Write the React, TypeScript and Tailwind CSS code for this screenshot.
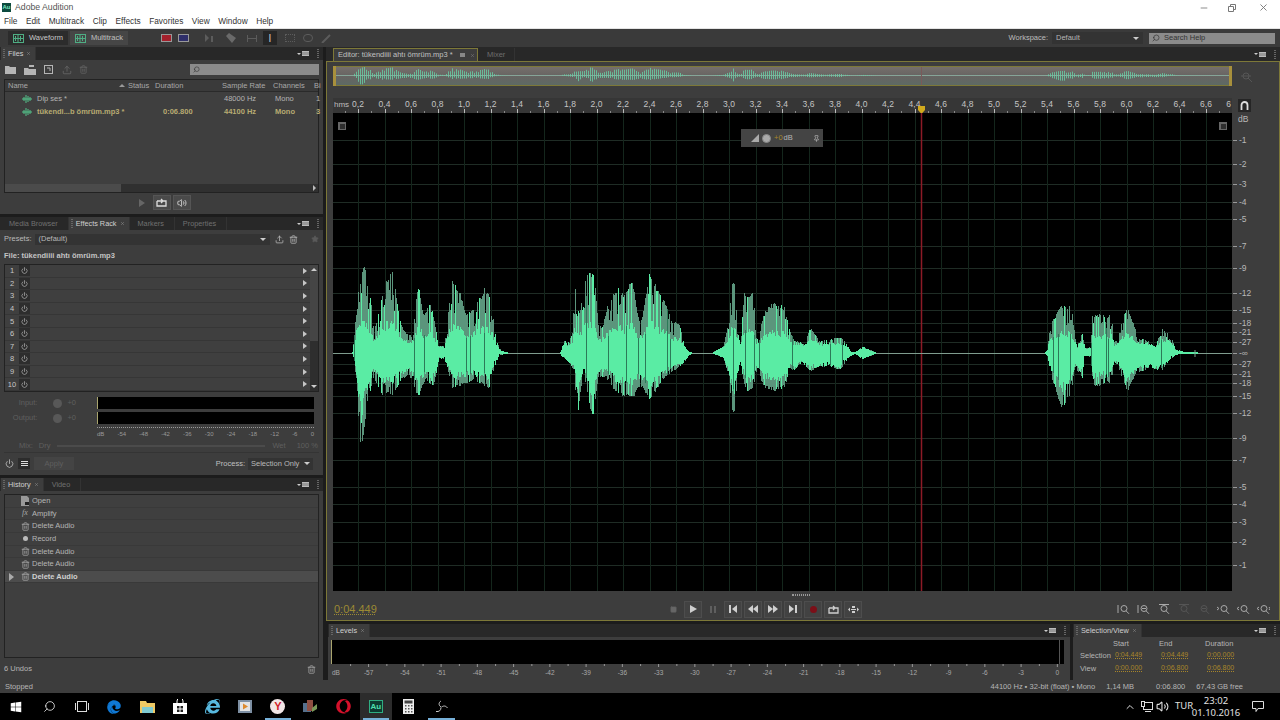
import { ChevronUp, Minus, Pin, Power, Search, Square, Star, Trash2, Upload, Volume2, X } from 'lucide-react'
import { FaEdge, FaInternetExplorer, FaOpera, FaWindows } from 'react-icons/fa'

type Pt = [number, number]

const upper: Pt[][] = [
  [[353, 1], [355, 18], [357, 50], [363, 90], [370, 52], [373, 18], [378, 35], [387, 78], [392, 83], [398, 35], [403, 22], [413, 15], [418, 65], [423, 35], [430, 52], [437, 8], [445, 7], [452, 72], [460, 58], [465, 37], [473, 45], [485, 65], [490, 52], [495, 12], [500, 2], [506, 1]],
  [[561, 1], [562, 3], [564, 12], [568, 10], [573, 20], [575, 65], [578, 30], [587, 83], [593, 78], [597, 30], [603, 25], [607, 45], [618, 68], [623, 55], [631, 73], [640, 22], [650, 80], [657, 62], [665, 50], [670, 33], [678, 30], [683, 8], [687, 2], [690, 1]],
  [[714, 1], [724, 7], [729, 30], [733, 72], [737, 18], [741, 15], [745, 62], [752, 62], [755, 15], [759, 12], [764, 40], [772, 50], [783, 47], [788, 25], [793, 13], [802, 10], [805, 8], [810, 24], [819, 12], [831, 14], [839, 16], [845, 10], [850, 1], [855, 1], [862, 6], [869, 3], [874, 1]],
  [[1046, 1], [1048, 3], [1051, 30], [1062, 48], [1070, 48], [1074, 15], [1077, 2], [1081, 19], [1084, 4], [1091, 6], [1093, 40], [1110, 38], [1113, 12], [1118, 12], [1124, 40], [1127, 45], [1134, 25], [1137, 15], [1148, 12], [1156, 4], [1161, 25], [1170, 18], [1174, 4], [1182, 1.5], [1196, 1]],
]

const lower: Pt[][] = [
  [[353, 1], [355, 8], [357, 33], [361, 98], [365, 57], [373, 23], [383, 43], [392, 43], [400, 27], [410, 22], [418, 43], [425, 25], [432, 35], [438, 5], [445, 6], [453, 35], [473, 28], [488, 35], [493, 15], [498, 2], [506, 1]],
  [[561, 1], [562, 3], [568, 8], [575, 18], [577, 57], [583, 15], [592, 62], [597, 25], [607, 25], [617, 42], [632, 45], [640, 32], [650, 47], [660, 28], [673, 18], [682, 10], [690, 1]],
  [[714, 1], [724, 5], [729, 22], [733, 60], [737, 18], [741, 12], [747, 42], [752, 35], [757, 10], [764, 35], [774, 38], [784, 35], [788, 15], [793, 18], [802, 8], [810, 18], [819, 14], [831, 14], [839, 17], [848, 4], [855, 1], [862, 6], [869, 3], [874, 1]],
  [[1046, 1], [1048, 3], [1053, 28], [1062, 55], [1070, 40], [1074, 10], [1081, 25], [1083, 3], [1091, 4], [1094, 35], [1110, 30], [1113, 8], [1118, 12], [1127, 38], [1134, 22], [1148, 15], [1161, 18], [1168, 8], [1174, 2], [1182, 1], [1196, 1]],
]

function interp(groups: Pt[][], x: number) {
  for (const pts of groups) {
    if (x < pts[0][0] || x > pts[pts.length - 1][0]) continue
    for (let i = 1; i < pts.length; i++) {
      if (x <= pts[i][0]) {
        const [x0, y0] = pts[i - 1]
        const [x1, y1] = pts[i]
        return y0 + ((y1 - y0) * (x - x0)) / (x1 - x0)
      }
    }
  }
  return 0
}

// widen the peaks a little, the outline points sit on the very tips
const fat = (groups: Pt[][], x: number) => Math.max(interp(groups, x - 1), interp(groups, x), interp(groups, x + 1))

function buildWave() {
  let seed = 17
  const rnd = () => {
    seed = (seed * 16807) % 2147483647
    return seed / 2147483647
  }
  const columns = []
  for (let x = 333; x < 1232; x++) {
    const up = fat(upper, x)
    const down = fat(lower, x)
    if (up < 0.5 && down < 0.5) continue
    const r = rnd() < 0.3 ? 0.55 + rnd() * 0.25 : 0.9 + rnd() * 0.1
    const spike = rnd() < 0.24
    const dimUp = up * r
    const dimDown = down * r
    const softUp = Math.min(up, 6 + 0.34 * up) * (0.72 + rnd() * 0.28)
    const softDown = Math.min(down, 5 + 0.62 * down) * (0.72 + rnd() * 0.28)
    columns.push({
      x: x + 0.5,
      dimUp,
      dimDown,
      brightUp: spike ? dimUp : softUp,
      brightDown: spike ? dimDown : softDown,
      cut: up > 12 && rnd() < 0.035,
    })
  }
  return columns
}

const columns = buildWave()
const dimPath = columns.map((c) => `M${c.x} ${352 - c.dimUp}V${352 + c.dimDown}`).join('')
const brightPath = columns.filter((c) => !c.cut).map((c) => `M${c.x} ${352 - c.brightUp}V${352 + c.brightDown}`).join('')
const cutPath = columns.filter((c) => c.cut).map((c) => `M${c.x} ${352 - c.brightUp}V${352 + c.brightDown}`).join('')
const miniPath = columns.filter((c, i) => i % 2 === 0).map((c) => `M${c.x} ${74.5 - c.dimUp * 0.1}V${74.5 + c.dimDown * 0.1}`).join('')

const dbMarks: [string, number][] = [
  ['-1', 139], ['-2', 163], ['-3', 183], ['-4', 201], ['-5', 218], ['-7', 245], ['-9', 267], ['-12', 292], ['-15', 309], ['-18', 322], ['-21', 331], ['-27', 341], ['-∞', 352], ['-27', 363], ['-21', 373], ['-18', 382], ['-15', 395], ['-12', 412], ['-9', 437], ['-7', 459], ['-5', 486], ['-4', 503], ['-3', 521], ['-2', 541], ['-1', 564],
]

const timeX = (t: number) => 331.5 + 132.5 * t
const seconds = Array.from({ length: 33 }, (_, i) => (i + 1) * 0.2)
const tenths = Array.from({ length: 34 }, (_, i) => i * 0.2 + 0.1)

const font = 'Liberation Sans, Arial, sans-serif'

function Grip() {
  return <div className="mx-[2px] h-[9px] w-[2px] border-x border-dotted border-[#666]" />
}

function PanelMenu() {
  return (
    <div className="ml-auto flex items-center gap-[6px] pr-[2px]">
      <div className="flex items-center gap-[1px]">
        <div className="h-0 w-0 border-x-[2px] border-t-[2px] border-x-transparent border-t-[#ccc]" />
        <div className="h-[5px] w-[7px] border-y border-[#bbb] bg-[#999]" />
      </div>
      <Grip />
    </div>
  )
}

function Tab({ label, active, close }: { label: string; active?: boolean; close?: boolean }) {
  return (
    <div className={`flex h-full items-center gap-[1px] border-r border-[#333] ${active ? 'bg-[#3d3d3d] pr-[4px] text-[#d0d0d0]' : 'px-[8px] text-[#707070]'}`}>
      {active && <Grip />}
      <span className="mr-[2px] pt-[2px]">{label}</span>
      {close && <X size={5} className="text-[#999]" />}
    </div>
  )
}

function TabBar({ children }: { children: React.ReactNode }) {
  return <div className="flex h-[13px] shrink-0 items-center bg-[#282828] pl-[1px] text-[7.300px]">{children}<PanelMenu /></div>
}

function WaveIcon({ color = '#54c48c' }: { color?: string }) {
  return (
    <svg width="10" height="8" viewBox="0 0 10 8" fill="none" stroke={color}>
      <path d="M0 4h10M2 2v4M4 0v8M6 1v6M8 2v4" />
    </svg>
  )
}

function ModeIcon() {
  return (
    <svg width="11" height="9" viewBox="0 0 11 9" fill="none" stroke="#4fae84">
      <rect x="0.5" y="0.5" width="10" height="8" />
      <path d="M0 4.5h11M2.5 2v5M5 1v7M7.5 2v5" />
    </svg>
  )
}

function Zoomer({ mark, dim }: { mark: string; dim?: boolean }) {
  return (
    <svg width="13" height="11" viewBox="0 0 13 11" fill="none" stroke={dim ? '#555' : '#a9a9a9'} strokeWidth="1">
      <circle cx="7" cy="4.5" r="3" />
      <path d="M9 6.8l3 3" />
      <path d={mark} />
    </svg>
  )
}

function FilesPanel() {
  const cols = 'grid grid-cols-[120px_27px_67px_51px_41px_1fr] items-center'
  return (
    <div className="flex h-[167px] shrink-0 flex-col">
      <TabBar><Tab label="Files" active close /></TabBar>
      <div className="flex flex-1 flex-col bg-[#3d3d3d] px-[4px]">
        <div className="flex h-[19px] shrink-0 items-center gap-[7px] pl-[1px]">
          <svg width="12" height="9" viewBox="0 0 12 9" fill="#b5b5b5"><path d="M0 1h4l1 1h6v7H0z" /></svg>
          <svg width="13" height="10" viewBox="0 0 13 10" fill="#b5b5b5"><path d="M0 3h4l1 1h7v6H0zM5 0h5v2H5z" /></svg>
          <svg width="11" height="9" viewBox="0 0 11 9" fill="none" stroke="#b5b5b5"><rect x="0.5" y="0.5" width="8" height="8" /><path d="M3 3h3v3" /></svg>
          <Upload size={10} className="text-[#666]" />
          <Trash2 size={9} className="text-[#666]" />
          <div className="ml-auto flex h-[11px] w-[129px] items-center bg-[#8b8b8b] pl-[3px]">
            <Search size={7} className="-scale-x-100 text-[#333]" />
          </div>
        </div>
        <div className="flex h-[114px] shrink-0 flex-col border border-[#222] bg-[#3f3f3f] text-[7.500px]">
          <div className={`${cols} h-[12px] shrink-0 border-b border-[#2a2a2a] bg-[#3a3a3a] pl-[3px] text-[#a8a8a8]`}>
            <span className="flex items-center justify-between pr-[3px]">Name<span className="h-0 w-0 border-x-[3px] border-b-[3px] border-x-transparent border-b-[#999]" /></span>
            <span>Status</span>
            <span>Duration</span>
            <span>Sample Rate</span>
            <span>Channels</span>
            <span>Bi</span>
          </div>
          <div className={`${cols} h-[13px] text-[#b5b5b5]`}>
            <span className="flex items-center gap-[5px] pl-[17px]"><WaveIcon />Dip ses *</span>
            <span />
            <span />
            <span className="pl-[5px]">48000 Hz</span>
            <span className="pl-[5px]">Mono</span>
            <span className="pl-[5px]">1</span>
          </div>
          <div className={`${cols} h-[13px] font-bold text-[#b8ab72]`}>
            <span className="flex items-center gap-[5px] whitespace-nowrap pl-[17px]"><WaveIcon />tükendi...b ömrüm.mp3 *</span>
            <span />
            <span className="pl-[11px]">0:06.800</span>
            <span className="pl-[5px]">44100 Hz</span>
            <span className="pl-[5px]">Mono</span>
            <span className="pl-[5px]">3</span>
          </div>
          <div className="mt-auto flex h-[8px] items-center bg-[#303030]">
            <div className="h-full w-[116px] bg-[#4b4b4b]" />
            <div className="ml-auto mr-[2px] h-0 w-0 border-y-[3px] border-l-[3px] border-y-transparent border-l-[#bbb]" />
          </div>
        </div>
        <div className="flex flex-1 items-start justify-center gap-[2px] pt-[2px]">
          <div className="flex h-[15px] w-[18px] items-center justify-center"><div className="h-0 w-0 border-y-[4px] border-l-[6px] border-y-transparent border-l-[#666]" /></div>
          <div className="flex h-[15px] w-[18px] items-center justify-center border border-[#555] bg-[#4a4a4a]">
            <svg width="11" height="9" viewBox="0 0 11 9" fill="none" stroke="#ddd" strokeWidth="1.3"><path d="M1 3v5h9V3H7M1 3h5M5 1l2 2-2 2" /></svg>
          </div>
          <div className="flex h-[15px] w-[18px] items-center justify-center border border-[#555] bg-[#4a4a4a]"><Volume2 size={10} className="text-[#ddd]" /></div>
        </div>
      </div>
    </div>
  )
}

function EffectsPanel() {
  const rows = [1, 2, 3, 4, 5, 6, 7, 8, 9, 10]
  const scale = ['dB', '-54', '-48', '-42', '-36', '-30', '-24', '-18', '-12', '-6', '0']
  return (
    <div className="flex h-[258px] shrink-0 flex-col">
      <TabBar>
        <Tab label="Media Browser" />
        <Tab label="Effects Rack" active close />
        <Tab label="Markers" />
        <Tab label="Properties" />
      </TabBar>
      <div className="flex flex-1 flex-col bg-[#3d3d3d] px-[4px] text-[7.500px] text-[#b9b9b9]">
        <div className="flex h-[18px] shrink-0 items-center gap-[3px]">
          <span>Presets:</span>
          <div className="flex h-[11px] w-[235px] items-center justify-between bg-[#333] pl-[4px] pr-[4px]">
            <span>(Default)</span>
            <div className="h-0 w-0 border-x-[3px] border-t-[3px] border-x-transparent border-t-[#ccc]" />
          </div>
          <Upload size={9} className="ml-[2px] text-[#bbb]" />
          <Trash2 size={9} className="ml-[2px] text-[#bbb]" />
          <Star size={8} fill="#5a5a5a" className="ml-[10px] text-[#5a5a5a]" />
        </div>
        <div className="flex h-[16px] shrink-0 items-center font-bold text-[#c4c4c4]">File: tükendiiii ahtı ömrüm.mp3</div>
        <div className="flex h-[128px] shrink-0 border border-[#222]">
          <div className="flex flex-1 flex-col">
            {rows.map((n) => (
              <div key={n} className="flex flex-1 items-center border-b border-[#363636] bg-[#3f3f3f] pr-[3px]">
                <span className="w-[14px] text-center text-[#c8c8c8]">{n}</span>
                <div className="flex h-[11px] w-[11px] items-center justify-center bg-[#2d2d2d]"><Power size={7} className="text-[#ccc]" /></div>
                <div className="ml-auto h-0 w-0 border-y-[3px] border-l-[4px] border-y-transparent border-l-[#c5c5c5]" />
              </div>
            ))}
          </div>
          <div className="flex w-[8px] flex-col items-center bg-[#2e2e2e]">
            <div className="flex h-[76px] w-full flex-col items-center bg-[#454545] pt-[3px]"><div className="h-0 w-0 border-x-[3px] border-b-[3px] border-x-transparent border-b-[#ccc]" /></div>
            <div className="mb-[3px] mt-auto h-0 w-0 border-x-[3px] border-t-[3px] border-x-transparent border-t-[#ccc]" />
          </div>
        </div>
        <div className="flex h-[48px] shrink-0 pt-[5px] text-[#5f5f5f]">
          <div className="flex w-[93px] flex-col gap-[3px]">
            <div className="flex h-[12px] items-center justify-end gap-[5px] pr-[21px]"><span className="mr-[11px]">Input:</span><span className="h-[9px] w-[9px] rounded-full bg-[#585858]" /><span>+0</span></div>
            <div className="flex h-[12px] items-center justify-end gap-[5px] pr-[21px]"><span className="mr-[11px]">Output:</span><span className="h-[9px] w-[9px] rounded-full bg-[#585858]" /><span>+0</span></div>
          </div>
          <div className="flex flex-1 flex-col gap-[3px] pr-[5px]">
            <div className="h-[12px] border-l border-[#a9a56e] bg-black" />
            <div className="h-[12px] border-l border-[#a9a56e] bg-black" />
            <div className="flex justify-between border-t border-dotted border-[#999] pt-[2px] text-[6px] text-[#999]">
              {scale.map((s, i) => <span key={i}>{s}</span>)}
            </div>
          </div>
        </div>
        <div className="flex h-[13px] shrink-0 items-center border-b border-[#343434] pl-[15px] text-[#5f5f5f]">
          <span className="mr-[6px]">Mix:</span>
          <span>Dry</span>
          <div className="mx-[7px] h-[2px] w-[208px] border-y border-[#4b4b4b] bg-[#333]" />
          <span>Wet</span>
          <span className="ml-[11px]">100 %</span>
        </div>
        <div className="flex flex-1 items-center pb-[1px]">
          <Power size={9} className="ml-[1px] text-[#c8c8c8]" />
          <div className="ml-[4px] flex h-[11px] w-[12px] flex-col items-center justify-center gap-[1px] bg-[#2c2c2c]"><div className="h-[1px] w-[7px] bg-[#ddd]" /><div className="h-[1px] w-[7px] bg-[#ddd]" /><div className="h-[1px] w-[7px] bg-[#ddd]" /></div>
          <div className="ml-[4px] flex h-[13px] w-[40px] items-center justify-center bg-[#444] text-[#5f5f5f]">Apply</div>
          <span className="ml-auto text-[#c0c0c0]">Process:</span>
          <div className="ml-[3px] mr-[6px] flex h-[12px] w-[65px] items-center justify-between bg-[#333] pl-[3px] pr-[3px]">
            <span className="whitespace-nowrap">Selection Only</span>
            <div className="h-0 w-0 border-x-[3px] border-t-[3px] border-x-transparent border-t-[#ccc]" />
          </div>
        </div>
      </div>
    </div>
  )
}

function HistoryPanel() {
  const bin = <Trash2 size={9} className="text-[#aaa]" />
  const items: [React.ReactNode, string][] = [
    [<svg key="o" width="9" height="10" viewBox="0 0 9 10" fill="#999"><path d="M0 0h6l2 2v8H0z" /><path d="M4 6h4v3H4z" fill="#222" /></svg>, 'Open'],
    [<span key="f" className="font-['Liberation_Serif'] text-[8px] italic text-[#aaa]">fx</span>, 'Amplify'],
    [bin, 'Delete Audio'],
    [<span key="r" className="h-[5px] w-[5px] rounded-full bg-[#bbb]" />, 'Record'],
    [bin, 'Delete Audio'],
    [bin, 'Delete Audio'],
    [bin, 'Delete Audio'],
  ]
  return (
    <div className="flex flex-1 flex-col">
      <TabBar>
        <Tab label="History" active close />
        <Tab label="Video" />
      </TabBar>
      <div className="flex flex-1 flex-col bg-[#3d3d3d] px-[4px] pt-[3px] text-[7.500px] text-[#b5b5b5]">
        <div className="flex h-[164px] shrink-0 flex-col border border-[#222] bg-[#3f3f3f]">
          {items.map(([icon, label], i) => (
            <div key={i} className={`flex h-[12.650px] shrink-0 items-center border-b border-[#393939] ${i === 6 ? 'bg-[#4c4c4c] font-bold text-[#d0d0d0]' : ''}`}>
              <div className="flex w-[13px] justify-center">
                {i === 6 && <div className="h-0 w-0 border-y-[4px] border-l-[5px] border-y-transparent border-l-[#aaa]" />}
              </div>
              <div className="flex w-[14px] justify-center">{icon}</div>
              <span>{label}</span>
            </div>
          ))}
        </div>
        <div className="flex flex-1 items-center justify-between pr-[3px]">
          <span>6 Undos</span>
          <Trash2 size={9} className="text-[#aaa]" />
        </div>
      </div>
    </div>
  )
}

function WaveDisplay() {
  return (
    <div className="relative w-[899px] shrink-0 bg-black">
      <svg width="899" height="478" viewBox="333 112 899 478" className="block">
        {dbMarks.map(([, y], i) => <path key={i} d={`M333 ${y + 0.5}H1232`} stroke="#1f2c25" />)}
        {seconds.map((t) => <path key={t} d={`M${Math.round(timeX(t)) + 0.5} 112V590`} stroke="#14261c" />)}
        <path d="M921.5 112V590" stroke="#8c1a26" strokeWidth="1.5" />
        <path d="M333 352.500H1232" stroke="#7f9c8e" />
        <g shapeRendering="crispEdges">
          <path d={dimPath} stroke="#5b957c" fill="none" />
          <path d={brightPath} stroke="#5aeca4" fill="none" />
          <path d={cutPath} stroke="#2c7a58" fill="none" />
        </g>
        <path d="M1195 349V356" stroke="#7a9c8c" />
      </svg>
      <div className="absolute left-[5px] top-[9px] flex h-[8px] w-[8px] items-center justify-center bg-[#666]"><div className="h-[5px] w-[5px] bg-[#2e2e2e]" /></div>
      <div className="absolute right-[5px] top-[9px] flex h-[8px] w-[8px] items-center justify-center bg-[#666]"><div className="h-[5px] w-[5px] bg-[#2e2e2e]" /></div>
      <div className="absolute left-[408px] top-[16px] flex h-[18px] w-[82px] items-center bg-[#444] pl-[10px] text-[7.500px] text-[#b5b5b5]">
        <svg width="8" height="8" viewBox="0 0 8 8" fill="#aaa"><path d="M0 8L8 0v8z" /></svg>
        <span className="ml-[3px] h-[9px] w-[9px] rounded-full border border-[#888] bg-[#aaa]" />
        <span className="ml-[3px] text-[#a8892a]">+0</span>
        <span className="ml-[1px]">dB</span>
        <Pin size={7} className="ml-auto mr-[3px] text-[#ccc]" />
      </div>
    </div>
  )
}

function Transport() {
  const box = 'flex h-[17px] w-[18px] items-center justify-center border border-[#4d4d4d] bg-[#424242]'
  const bright = '#cfcfcf'
  return (
    <div className="flex gap-[2px]">
      <div className="flex h-[17px] w-[18px] items-center justify-center"><Square size={7} fill="#666" className="text-[#666]" /></div>
      <div className={box}><div className="h-0 w-0 border-y-[4px] border-l-[7px] border-y-transparent border-l-[#cfcfcf]" /></div>
      <div className="flex h-[17px] w-[18px] items-center justify-center gap-[2px]"><div className="h-[7px] w-[2px] bg-[#5f5f5f]" /><div className="h-[7px] w-[2px] bg-[#5f5f5f]" /></div>
      <div className={box}><svg width="8" height="8" viewBox="0 0 8 8" fill={bright}><path d="M0 0h2v8H0zM8 0v8L3 4z" /></svg></div>
      <div className={box}><svg width="10" height="8" viewBox="0 0 10 8" fill={bright}><path d="M5 0v8L0 4zM10 0v8L5 4z" /></svg></div>
      <div className={box}><svg width="10" height="8" viewBox="0 0 10 8" fill={bright}><path d="M0 0v8l5-4zM5 0v8l5-4z" /></svg></div>
      <div className={box}><svg width="8" height="8" viewBox="0 0 8 8" fill={bright}><path d="M6 0h2v8H6zM0 0v8l5-4z" /></svg></div>
      <div className={box}><span className="h-[7px] w-[7px] rounded-full bg-[#7c0f18]" /></div>
      <div className={box}><svg width="11" height="9" viewBox="0 0 11 9" fill="none" stroke={bright} strokeWidth="1.3"><path d="M1 3v5h9V3H7M1 3h5M5 1l2 2-2 2" /></svg></div>
      <div className={box}><svg width="11" height="9" viewBox="0 0 11 9" fill={bright}><path d="M3 4h5v1H3zM0 4.500l2-2v4zM11 4.500l-2-2v4zM4 1h3v2H4zM4 6h3v2H4z" /></svg></div>
    </div>
  )
}

function EditorPanel() {
  return (
    <div className="flex h-[574px] shrink-0 flex-col">
      <div className="flex h-[14px] shrink-0 items-end bg-[#282828] pl-[7px] text-[7.500px]">
        <div className="flex h-[13px] w-[145px] items-center border-x border-t border-[#7d7838] bg-[#3d3d3d] pl-[4px] text-[#c0c0c0]">
          <span className="whitespace-nowrap">Editor: tükendiiii ahtı ömrüm.mp3 *</span>
          <div className="ml-auto flex items-center gap-[5px] pr-[2px]">
            <div className="h-[4px] w-[5px] bg-[#888]" />
            <X size={5} className="text-[#888]" />
          </div>
        </div>
        <div className="flex h-[13px] items-center border-r border-[#333] px-[9px] text-[#6e6e6e]">Mixer</div>
        <div className="ml-auto self-center"><PanelMenu /></div>
      </div>
      <div className="flex flex-1 flex-col border border-[#7d7838] bg-[#3d3d3d]">
        <div className="flex h-[36px] shrink-0 items-start pl-[6px] pt-[4px]">
          <svg width="899" height="20" viewBox="333 65 899 20" className="block">
            <defs>
              <linearGradient id="ov" x1="0" y1="0" x2="0" y2="1">
                <stop offset="0" stopColor="#77706c" />
                <stop offset="0.5" stopColor="#676462" />
                <stop offset="1" stopColor="#5c6a64" />
              </linearGradient>
            </defs>
            <rect x="333" y="65" width="899" height="20" fill="url(#ov)" />
            <path d="M333 74.500H1232" stroke="#86a598" />
            <path d={miniPath} stroke="#69cfa6" strokeWidth="0.8" />
            <path d="M921.500 66V84" stroke="#7a5a5a" />
            <path d="M333 65.500H1232M333 84.500H1232" stroke="#7d7838" />
            <rect x="333" y="65" width="3" height="20" fill="#a8903c" />
            <rect x="1229" y="65" width="3" height="20" fill="#a8903c" />
          </svg>
          <svg width="12" height="12" viewBox="0 0 12 12" fill="none" stroke="#565656" className="ml-[9px] mt-[5px]"><circle cx="5" cy="5" r="3" /><path d="M7 7l4 4M0 5h10" /></svg>
        </div>
        <div className="flex h-[15px] shrink-0 items-center pl-[6px]">
          <svg width="899" height="15" viewBox="333 97 899 15" className="block shrink-0">
            <rect x="333" y="97" width="899" height="15" fill="#363636" />
            <text x="334" y="106" fontSize="8" fill="#bdbdbd" fontFamily={font}>hms</text>
            {seconds.map((t) => (
              <g key={t}>
                <text x={timeX(t)} y="106" fontSize="8.500" textAnchor="middle" fill="#c4c4c4" fontFamily={font}>{t < 6.7 ? t.toFixed(1).replace('.', ',') : ''}</text>
                <path d={`M${Math.round(timeX(t)) + 0.5} 108V112`} stroke="#bbb" />
              </g>
            ))}
            {tenths.map((t) => <path key={t} d={`M${Math.round(timeX(t)) + 0.5} 110V112`} stroke="#888" />)}
            <text x="1231" y="106" fontSize="8.500" textAnchor="end" fill="#c4c4c4" fontFamily={font}>6</text>
            <path d="M918 105h7v4l-3.500 4l-3.500-4z" fill="#d1aa1e" />
          </svg>
          <div className="ml-[6px] flex h-[13px] w-[13px] items-center justify-center bg-[#252525]">
            <svg width="9" height="9" viewBox="0 0 9 9" fill="none" stroke="#ddd" strokeWidth="1.800"><path d="M1.500 9V4a3 3 0 0 1 6 0v5" /></svg>
          </div>
        </div>
        <div className="flex h-[478px] shrink-0 pl-[6px]">
          <WaveDisplay />
          <svg width="46" height="478" viewBox="1232 112 46 478" className="block shrink-0">
            <text x="1238" y="121" fontSize="8.500" fill="#b8b8b8" fontFamily={font}>dB</text>
            {dbMarks.map(([label, y], i) => (
              <g key={i}>
                <path d={`M1233 ${y + 0.5}h4`} stroke="#9a9a9a" />
                <text x="1239" y={y + 3} fontSize="8.500" fill="#b8b8b8" fontFamily={font}>{label}</text>
              </g>
            ))}
          </svg>
        </div>
        <div className="flex h-[7px] shrink-0 items-center justify-center pr-[4px]">
          <div className="h-[2px] w-[18px] border-y border-dotted border-[#999]" />
        </div>
        <div className="flex flex-1 items-center pl-[7px] pr-[9px]">
          <span className="w-[330px] text-[11px] text-[#9c8a34] underline decoration-dotted underline-offset-1">0:04.449</span>
          <Transport />
          <div className="ml-auto flex items-center gap-[7px]">
            <Zoomer mark="M1 1v8" />
            <Zoomer mark="M1 1v8M5 4.500h4" />
            <Zoomer mark="M2 0.500h10" />
            <Zoomer mark="M2 0.500h10" dim />
            <Zoomer mark="M5 4.500h4" dim />
            <Zoomer mark="M0 3l2 1.500L0 6" />
            <Zoomer mark="M2 3L0 4.500L2 6" />
            <Zoomer mark="M2 3L0 4.500L2 6M12 3l1 1.500-1 1.500" />
          </div>
        </div>
      </div>
    </div>
  )
}

function BottomPanels() {
  const labels = ['-57', '-54', '-51', '-48', '-45', '-42', '-39', '-36', '-33', '-30', '-27', '-24', '-21', '-18', '-15', '-12', '-9', '-6', '-3', '0']
  return (
    <div className="mt-[3px] flex flex-1 gap-[3px] pl-[2px]">
      <div className="flex w-[742px] shrink-0 flex-col">
        <TabBar><Tab label="Levels" active close /></TabBar>
        <div className="flex flex-1 flex-col bg-[#3d3d3d] pl-[3px] pr-[6px] pt-[3px]">
          <div className="relative h-[24px] shrink-0 border-l border-[#a9a56e] bg-black">
            <div className="absolute bottom-0 right-[4px] top-0 w-[1px] bg-[#555]" />
          </div>
          <svg width="733" height="14" viewBox="331 665 733 14" className="block shrink-0">
            <text x="332" y="676" fontSize="6.500" fill="#a9a9a9" fontFamily={font}>dB</text>
            {labels.map((s, i) => {
              const x = 368.6 + i * 36.25
              return (
                <g key={s}>
                  <path d={`M${x} 665v3M${x - 18} 665v2`} stroke="#999" />
                  <text x={x} y="676" fontSize="6.500" textAnchor="middle" fill="#a9a9a9" fontFamily={font}>{s}</text>
                </g>
              )
            })}
          </svg>
        </div>
      </div>
      <div className="flex flex-1 flex-col">
        <TabBar><Tab label="Selection/View" active close /></TabBar>
        <div className="grid flex-1 grid-cols-[33px_46px_46px_46px] grid-rows-[11px_13px_13px] content-start bg-[#3d3d3d] pl-[7px] pt-[1px] text-[7.500px] text-[#b5b5b5]">
          <span />
          <span>Start</span>
          <span>End</span>
          <span>Duration</span>
          <span className="self-center whitespace-nowrap">Selection</span>
          {['0:04.449', '0:04.449', '0:00.000'].map((v, i) => <span key={i} className="self-center pl-[2px] text-[7px] text-[#a8862a] underline decoration-dotted">{v}</span>)}
          <span className="self-center">View</span>
          {['0:00.000', '0:06.800', '0:06.800'].map((v, i) => <span key={i} className="self-center pl-[2px] text-[7px] text-[#a8862a] underline decoration-dotted">{v}</span>)}
        </div>
      </div>
    </div>
  )
}

function Taskbar() {
  const slot = 'relative flex h-full w-[32.700px] shrink-0 items-center justify-center'
  const mark = 'absolute bottom-0 left-[3px] right-[3px] h-[2px] bg-[#76b0d8]'
  return (
    <div className="flex h-[27px] shrink-0 items-center bg-black text-white">
      <div className="flex h-full items-center">
        <div className={slot}><FaWindows size={12} /></div>
        <div className={slot}><Search size={13} strokeWidth={1.4} className="-scale-x-100" /></div>
        <div className={slot}>
          <svg width="14" height="11" viewBox="0 0 14 11" fill="none" stroke="#ddd"><rect x="2.500" y="0.500" width="9" height="10" /><path d="M0.500 2v7M13.500 2v7" /></svg>
        </div>
        <div className={slot}><FaEdge size={14} className="text-[#0f78d4]" /></div>
        <div className={slot}>
          <svg width="15" height="12" viewBox="0 0 15 12"><path d="M0 0h6l1 2h8v10H0z" fill="#eec964" /><rect x="2" y="6" width="11" height="6" fill="#7fcad0" /></svg>
        </div>
        <div className={slot}>
          <svg width="14" height="15" viewBox="0 0 14 15"><path d="M0 4h14v11H0z" fill="#fff" /><path d="M4 4V2a3 3 0 0 1 6 0v2" stroke="#fff" fill="none" /><path d="M4 7h2.500v2.500H4zM7.500 7H10v2.500H7.500zM4 10.500h2.500V13H4zM7.500 10.500H10V13H7.500z" fill="#222" /></svg>
        </div>
        <div className={slot}><FaInternetExplorer size={15} className="text-[#58b9df]" /></div>
        <div className={slot}>
          <svg width="14" height="13" viewBox="0 0 14 13"><rect width="14" height="13" fill="#7d8fa3" /><rect x="2" y="2" width="10" height="9" fill="#e3e3e3" /><path d="M5 3.500v6l5-3z" fill="#dd8a2e" /></svg>
        </div>
        <div className={slot}>
          <div className="flex h-[15px] w-[15px] items-center justify-center rounded-full bg-[#f1e6e6] text-[11px] font-bold text-[#d01c2a]">Y</div>
          <div className={mark} />
        </div>
        <div className={slot}>
          <svg width="15" height="13" viewBox="0 0 15 13"><rect x="0" y="3" width="8" height="9" fill="#56708c" /><rect x="4" y="0" width="6" height="11" fill="#8f4f42" /><path d="M9 8l5-4v5l-5 3z" fill="#7b9a5a" /></svg>
        </div>
        <div className={slot}><FaOpera size={15} className="text-[#d4112b]" /></div>
        <div className={`${slot} bg-[#2c2c2c]`}>
          <div className="flex h-[13px] w-[14px] items-center justify-center border border-[#2fae82] bg-[#0d3b31] text-[8px] font-bold text-[#4fe0ae]">Au</div>
          <div className={mark} />
        </div>
        <div className={slot}>
          <svg width="11" height="15" viewBox="0 0 11 15"><rect width="11" height="15" fill="#eee" /><rect x="1.500" y="1.500" width="8" height="3" fill="#444" /><path d="M2 6h1.500v1.500H2zM5 6h1.500v1.500H5zM8 6h1.500v1.500H8zM2 9h1.500v1.500H2zM5 9h1.500v1.500H5zM8 9h1.500v1.500H8zM2 12h1.500v1.500H2zM5 12h1.500v1.500H5zM8 12h1.500v1.500H8z" fill="#555" /></svg>
        </div>
        <div className={slot}>
          <svg width="13" height="14" viewBox="0 0 13 14" fill="none" stroke="#c9c9c9"><path d="M6 7C3 5 4 2 6 1M6.500 7c3-2 5-.5 6 1M6 7.500c0 3-2 4.500-5 4" /></svg>
          <div className={mark} />
        </div>
      </div>
      <div className="ml-auto flex h-full items-center text-[#e0e0e0]">
        <ChevronUp size={12} className="mr-[3px]" />
        <svg width="12" height="11" viewBox="0 0 12 11" fill="none" stroke="#ddd" className="ml-[2px]"><rect x="2.500" y="1.500" width="9" height="7" /><rect x="0.500" y="0.500" width="3" height="5" fill="#000" /><path d="M4 10.500h6" /></svg>
        <Volume2 size={13} className="ml-[3px]" />
        <span className="ml-[6px] w-[18px] text-[9.500px]" style={{ fontFamily: 'Noto Sans, sans-serif' }}>TUR</span>
        <div className="flex w-[46px] flex-col items-center text-[9.500px] leading-[12px]" style={{ fontFamily: 'Noto Sans, sans-serif' }}>
          <span>23:02</span>
          <span>01.10.2016</span>
        </div>
        <svg width="12" height="11" viewBox="0 0 12 11" fill="none" stroke="#ddd" className="ml-[13px] mr-[16px]"><path d="M0.500 0.500h11v7H6l-2 3v-3H0.500z" /></svg>
      </div>
    </div>
  )
}

export default function App() {
  return (
    <div className="flex h-[720px] w-[1280px] flex-col overflow-hidden bg-[#1c1c1c]" style={{ fontFamily: font }}>
      <div className="flex h-[15px] shrink-0 items-center bg-white text-[8.700px] text-[#555]">
        <div className="ml-[2px] flex h-[9px] w-[9px] items-center justify-center bg-[#0d4a3e] text-[6px] font-bold text-[#7ce8c0]">Au</div>
        <span className="ml-[4px]">Adobe Audition</span>
        <div className="ml-auto flex items-center text-[#777]">
          <Minus size={10} className="mr-[19px]" />
          <svg width="8" height="8" viewBox="0 0 8 8" fill="none" stroke="#777" className="mr-[22px]"><path d="M0.500 2.500h5v5h-5zM2.500 2.500v-2h5v5h-2" /></svg>
          <X size={11} className="mr-[11px]" />
        </div>
      </div>
      <div className="flex h-[14px] shrink-0 items-center gap-[8.500px] border-b border-[#e4e4e4] bg-white pl-[4px] text-[8.300px] text-[#333]">
        {['File', 'Edit', 'Multitrack', 'Clip', 'Effects', 'Favorites', 'View', 'Window', 'Help'].map((m) => <span key={m}>{m}</span>)}
      </div>
      <div className="flex h-[18px] shrink-0 items-center bg-[#3a3a3a] text-[7.500px]">
        <div className="ml-[8px] flex h-[14px] w-[60px] items-center justify-center gap-[5px] bg-[#2c2c2c] text-[#c8c8c8]"><ModeIcon />Waveform</div>
        <div className="ml-[2px] flex h-[14px] w-[58px] items-center justify-center gap-[5px] bg-[#464646] text-[#c0c0c0]"><ModeIcon />Multitrack</div>
        <div className="ml-[33px] h-[8px] w-[11px] border border-[#999] bg-[#a3202c]" />
        <div className="ml-[6px] h-[8px] w-[11px] border border-[#999] bg-[#2f2f6a]" />
        <div className="ml-[16px] flex items-center gap-[11px] text-[#5c5c5c]">
          <svg width="10" height="8" viewBox="0 0 10 8" fill="#5c5c5c"><path d="M0 0l4 4-4 4zM6 2h2v6H6z" /></svg>
          <svg width="10" height="10" viewBox="0 0 10 10" fill="#6a6a6a"><path d="M0 3l3-3 7 5-4 5z" /></svg>
          <svg width="10" height="7" viewBox="0 0 10 7" fill="none" stroke="#5c5c5c"><path d="M0.500 0v7M9.500 0v7M1 3.500h8" /></svg>
        </div>
        <div className="ml-[6px] flex h-[14px] w-[14px] items-center justify-center bg-[#262626] text-[10px] text-[#cfcfcf]">I</div>
        <div className="ml-[8px] flex items-center gap-[8px]">
          <div className="h-[8px] w-[10px] border border-dotted border-[#5c5c5c]" />
          <div className="h-[8px] w-[10px] rounded-full border border-[#5c5c5c]" />
          <svg width="10" height="9" viewBox="0 0 10 9" stroke="#5c5c5c" strokeWidth="2"><path d="M1 9l8-8" /></svg>
        </div>
        <div className="ml-auto flex items-center pr-[5px]">
          <span className="text-[#bdbdbd]">Workspace:</span>
          <div className="ml-[4px] flex h-[12px] w-[91px] items-center justify-between bg-[#333] pl-[4px] pr-[4px] text-[#b5b5b5]">
            Default
            <div className="h-0 w-0 border-x-[3px] border-t-[3px] border-x-transparent border-t-[#ccc]" />
          </div>
          <div className="ml-[6px] flex h-[11px] w-[126px] items-center gap-[4px] bg-[#8b8b8b] pl-[3px] text-[#333]">
            <Search size={8} className="-scale-x-100" />
            Search Help
          </div>
        </div>
      </div>
      <div className="flex h-[633px] shrink-0">
        <div className="flex w-[323px] shrink-0 flex-col gap-[3px]">
          <FilesPanel />
          <EffectsPanel />
          <HistoryPanel />
        </div>
        <div className="ml-[3px] flex flex-1 flex-col">
          <EditorPanel />
          <BottomPanels />
        </div>
      </div>
      <div className="flex h-[13px] shrink-0 items-center bg-[#3d3d3d] pl-[5px] text-[7.500px] text-[#b5b5b5]">
        <span>Stopped</span>
        <div className="ml-auto flex items-center pr-[37px]">
          <span>44100 Hz ▪ 32-bit (float) ▪ Mono</span>
          <span className="ml-[11px]">1,14 MB</span>
          <span className="ml-[22px]">0:06.800</span>
          <span className="ml-[11px]">67,43 GB free</span>
        </div>
      </div>
      <Taskbar />
    </div>
  )
}
